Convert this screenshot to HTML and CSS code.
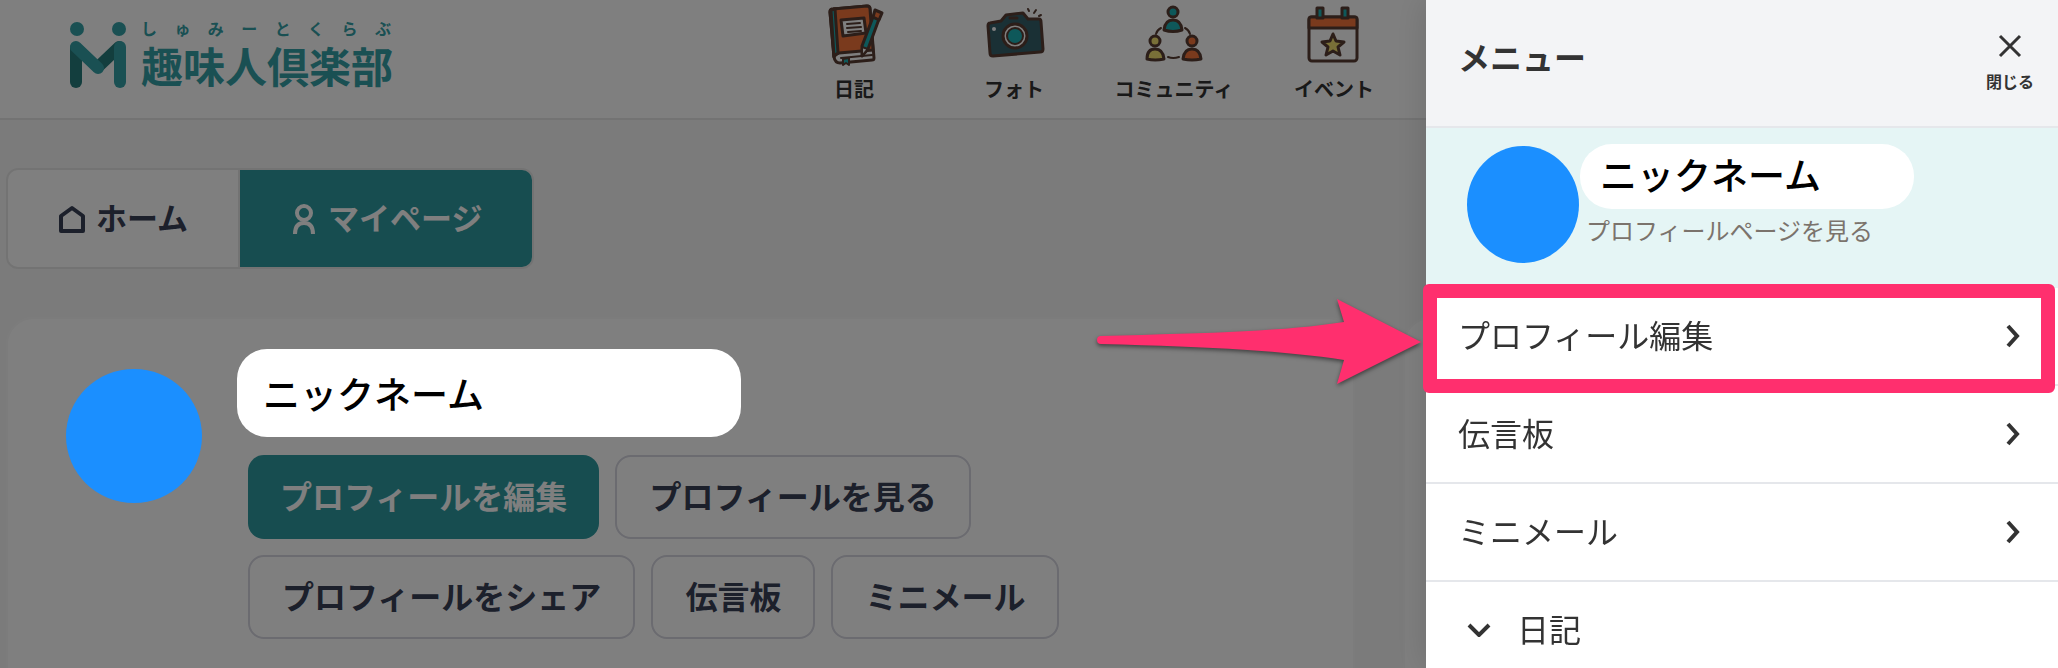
FILE: index.html
```html
<!DOCTYPE html>
<html lang="ja">
<head>
  <meta charset="UTF-8" />
  <meta name="viewport" content="width=device-width, initial-scale=1.0"/>
  <title>趣味人倶楽部</title>

  <link rel="stylesheet" href="styles.css">
</head>
<body>

<header class="site-header">
  <a class="logo" href="#">
    <svg class="logo-mark" viewBox="0 0 56 66" aria-hidden="true">
      <circle cx="7" cy="7" r="7" fill="#34a0a6"/>
      <circle cx="49" cy="7" r="7" fill="#34a0a6"/>
      <path d="M6 26V60" stroke="#277c7c" stroke-width="12" stroke-linecap="round"/>
      <path d="M28 45L49 25" stroke="#277c7c" stroke-width="12" stroke-linecap="round"/>
      <path d="M50 25V60" stroke="#34a0a6" stroke-width="12" stroke-linecap="round"/>
      <path d="M6 25L28 46" stroke="#34a0a6" stroke-width="12" stroke-linecap="round"/>
    </svg>
    <span class="logo-text">
      <span class="logo-kana"><i>し</i><i>ゅ</i><i>み</i><i>ー</i><i>と</i><i>く</i><i>ら</i><i>ぶ</i></span>
      <span class="logo-name">趣味人倶楽部</span>
    </span>
  </a>

  <nav class="site-nav">
    <a href="#">
      <svg viewBox="0 0 70 70" aria-hidden="true" stroke="#583c32" stroke-width="3" stroke-linejoin="round" stroke-linecap="round">
        <path d="M14 9L48 6Q51 6 51 9L55 58Q55 60 53 60L21 63Q16 63 15 57L11 12Q11 9 14 9Z" fill="#fff"/>
        <path d="M14 9L48 6Q51 6 51 9L54 50L20 53Q16 54 15 57L11 12Q11 9 14 9Z" fill="#f4743b"/>
        <path d="M12 10L16 9L19 53L15 56Z" fill="#1cb0b4"/>
        <path d="M22 20L45 18L47 33L24 36Z" fill="#fff"/>
        <path d="M28 24L41 23M28 28L42 27M29 32L42 31" fill="none" stroke-width="2"/>
        <path d="M22 58L53 55" fill="none" stroke-width="2"/>
        <path d="M24 59V65L27 63L30 65V58Z" fill="#1cb0b4" stroke-width="2"/>
        <path d="M54 17L60 19L49 49L43 56L43 46Z" fill="#1cb0b4"/>
        <path d="M56 10L63 13L60 20L54 17Z" fill="#f4743b"/>
        <path d="M43 47L49 49L43 56Z" fill="#fff" stroke-width="2"/>
      </svg>
      日記
    </a>
    <a href="#">
      <svg viewBox="0 0 70 70" aria-hidden="true" stroke="#583c32" stroke-width="3" stroke-linejoin="round" stroke-linecap="round">
        <path d="M11 23L22 21L27 15L44 13L49 19L60 19Q62 19 62 22L64 49Q64 52 61 52L14 56Q11 56 11 53L9 26Q9 23 11 23Z" fill="#35606a"/>
        <circle cx="36" cy="36" r="12" fill="#fff"/>
        <circle cx="36" cy="36" r="8" fill="#1cb0b4" stroke-width="2"/>
        <path d="M31 18L38 18" fill="none"/>
        <circle cx="15" cy="29" r="2" fill="#fff" stroke="none"/>
        <path d="M49 9L50 11M57 10L55 13M62 15L60 16" fill="none" stroke-width="2"/>
      </svg>
      フォト
    </a>
    <a href="#">
      <svg viewBox="0 0 70 70" aria-hidden="true" stroke="#583c32" stroke-width="3" stroke-linejoin="round" stroke-linecap="round">
        <circle cx="34" cy="12" r="5" fill="#1cb0b4"/>
        <path d="M25 30Q26 20 34 20Q42 20 43 30Q34 33 25 30Z" fill="#1cb0b4"/>
        <circle cx="16" cy="41" r="5" fill="#f2e070"/>
        <path d="M8 59Q8 49 16 49Q24 49 25 59Q16 61 8 59Z" fill="#f2e070"/>
        <circle cx="53" cy="41" r="5" fill="#f4743b"/>
        <path d="M44 59Q45 49 53 49Q61 49 62 59Q53 61 44 59Z" fill="#f4743b"/>
        <path d="M17 34Q18 30 22 28M46 28Q50 30 51 34M29 57Q34 59 40 57" fill="none" stroke-width="2"/>
      </svg>
      コミュニティ
    </a>
    <a href="#">
      <svg viewBox="0 0 70 70" aria-hidden="true" stroke="#583c32" stroke-width="3" stroke-linejoin="round" stroke-linecap="round">
        <rect x="10" y="17" width="48" height="44" rx="3" fill="#fff"/>
        <path d="M10 28V19Q10 17 12 17H56Q58 17 58 19V28Z" fill="#f4743b"/>
        <path d="M18 8H24V18H18ZM43 8H49V18H43Z" fill="#1cb0b4"/>
        <path d="M34 34L37 41L45 42L39 47L41 55L34 51L27 55L29 47L23 42L31 41Z" fill="#f2e070"/>
      </svg>
      イベント
    </a>
  </nav>
</header>

<main>
  <div class="tabs">
    <a href="#">
      <svg viewBox="0 0 28 30" aria-hidden="true" fill="none" stroke="currentColor" stroke-width="4" stroke-linejoin="round"><path d="M3 12L14 4L25 12V27H3Z"/></svg>
      <span>ホーム</span>
    </a>
    <a class="active" href="#">
      <svg viewBox="0 0 28 30" aria-hidden="true" fill="none" stroke="currentColor" stroke-width="4"><circle cx="14" cy="9" r="7"/><path d="M5 30Q5 19 14 19Q23 19 23 30"/></svg>
      <span>マイページ</span>
    </a>
  </div>

  <div class="columns">
    <section class="card profile">
      <div class="avatar"></div>
      <div class="profile-body">
        <div class="nickname">ニックネーム</div>
        <div class="actions">
          <button class="btn btn-primary" type="button">プロフィールを編集</button>
          <button class="btn" type="button">プロフィールを見る</button>
        </div>
        <div class="actions">
          <button class="btn" type="button">プロフィールをシェア</button>
          <button class="btn" type="button">伝言板</button>
          <button class="btn" type="button">ミニメール</button>
        </div>
      </div>
    </section>
    <aside class="card"></aside>
  </div>
</main>

<div class="overlay"></div>

<aside class="drawer">
  <div class="drawer-header">
    <h2>メニュー</h2>
    <button class="close" type="button">
      <svg viewBox="0 0 24 24" aria-hidden="true" fill="none" stroke="currentColor" stroke-width="3"><path d="M2 2L22 22M22 2L2 22"/></svg>
      閉じる
    </button>
  </div>

  <a class="drawer-profile" href="#">
    <span class="drawer-avatar"></span>
    <span>
      <span class="drawer-name">ニックネーム</span>
      <span class="drawer-link">プロフィールページを見る</span>
    </span>
  </a>

  <ul class="menu">
    <li class="highlight">
      <a href="#"><span>プロフィール編集</span>
        <svg class="chevron" viewBox="0 0 14 24" aria-hidden="true"><path d="M2 2L11 12L2 22"/></svg>
      </a>
      <svg class="arrow" viewBox="0 0 326 88" aria-hidden="true">
        <path d="M5 37C120 34 190 32 248 23L241 0L325 43L241 85L248 61C190 52 120 48 5 45A4 4 0 0 1 5 37Z" fill="#ff2f6e"/>
      </svg>
    </li>
    <li>
      <a href="#"><span>伝言板</span>
        <svg class="chevron" viewBox="0 0 14 24" aria-hidden="true"><path d="M2 2L11 12L2 22"/></svg>
      </a>
    </li>
    <li>
      <a href="#"><span>ミニメール</span>
        <svg class="chevron" viewBox="0 0 14 24" aria-hidden="true"><path d="M2 2L11 12L2 22"/></svg>
      </a>
    </li>
    <li>
      <button class="group" type="button">
        <svg class="chevron-down" viewBox="0 0 24 14" aria-hidden="true"><path d="M2 2L12 12L22 2"/></svg>
        <span>日記</span>
      </button>
    </li>
  </ul>
</aside>

</body>
</html>
```
FILE: styles.css
```css
* {
  box-sizing: border-box;
}

body {
  font-family: "Noto Sans CJK JP", sans-serif;
  background: #f7f7f7;
  color: #333;
  margin: 0;
  height: 100vh;
  overflow: hidden; /* no page scroll while the menu is open */
}

a {
  color: inherit;
  text-decoration: none;
}

button {
  font-family: inherit;
  color: inherit;
  background: none;
  border: none;
  padding: 0;
  cursor: pointer;
}

svg {
  display: block;
}

/* header */
.site-header {
  display: flex;
  justify-content: space-between;
  height: 120px;
  padding-left: 70px;
  padding-right: 644px;
  background: #fff;
  border-bottom: 2px solid #e7e7e7;
}

.logo {
  display: flex;
  gap: 15px;
  padding-top: 20px;
  color: #34a0a6;
}

.logo-mark {
  width: 56px;
  height: 66px;
  margin-top: 2px;
  fill: none;
}

.logo-text {
  width: 250px;
  white-space: nowrap;
}

.logo-kana {
  display: flex;
  justify-content: space-between;
  font-size: 16px;
  line-height: 16px;
  font-weight: bold;
}

.logo-kana i {
  font-style: normal;
}

.logo-name {
  display: block;
  margin-top: 8px;
  font-size: 42px;
  line-height: 42px;
  font-weight: bold;
}

.site-nav {
  display: flex;
}

.site-nav a {
  width: 160px;
  display: flex;
  flex-direction: column;
  align-items: center;
  gap: 7px;
  font-size: 20px;
  line-height: 24px;
  font-weight: bold;
}

.site-nav svg {
  width: 70px;
  height: 70px;
}

/* page */
main {
  padding: 48px 6px 0;
}

.tabs {
  display: inline-flex;
  height: 101px;
  border: 2px solid #e7e7e7;
  border-radius: 12px;
  background: #fff;
  overflow: hidden;
}

.tabs a {
  display: flex;
  align-items: center;
  gap: 10px;
  padding: 0 50px;
  font-size: 31px;
  font-weight: bold;
  color: #384056;
}

.tabs span {
  padding-bottom: 4px;
}

.tabs a + a {
  border-left: 2px solid #e7e7e7;
}

.tabs svg {
  width: 28px;
  height: 30px;
}

.tabs .active {
  background: #2e9aa0;
  color: #fff;
}

.columns {
  display: grid;
  grid-template-columns: 1fr 649px;
  gap: 48px;
  margin-top: 48px;
}

.card {
  min-height: 500px;
  background: #fff;
  border: 2px solid #f9f9f9;
  border-radius: 28px;
}

.profile {
  display: flex;
  gap: 35px;
  padding: 30px 58px;
}

.avatar {
  position: relative;
  z-index: 2;
  width: 136px;
  height: 134px;
  margin-top: 20px;
  border-radius: 50%;
  background: #1b8fff;
}

.nickname {
  position: relative;
  z-index: 2;
  width: 504px;
  margin-bottom: 18px;
  padding: 0 26px;
  border-radius: 30px;
  background: #fff;
  color: #000;
  font-size: 37px;
  line-height: 88px;
  font-weight: 500;
}

.actions {
  display: flex;
  gap: 16px;
  margin: 0 0 16px 11px;
}

.btn {
  height: 84px;
  padding: 0 32px 4px;
  border: 2px solid #d6d6e0;
  border-radius: 16px;
  font-size: 32px;
  font-weight: bold;
  color: #384056;
}

.btn-primary {
  border: none;
  background: #2e9aa0;
  color: #fff;
}

.overlay {
  position: fixed;
  inset: 0;
  z-index: 1;
  background: rgba(0, 0, 0, 0.5);
}

/* side menu */
.drawer {
  position: fixed;
  top: 0;
  right: 0;
  bottom: 0;
  z-index: 3;
  width: 632px;
  background: #fff;
  box-shadow: 0 0 32px rgba(0, 0, 0, 0.15);
}

.drawer-header {
  display: flex;
  justify-content: space-between;
  align-items: center;
  height: 128px;
  padding: 0 24px 14px 32px;
  background: #f3f4f6;
  border-bottom: 2px solid #e5e7eb;
}

.drawer-header h2 {
  margin: 0;
  font-size: 32px;
  font-weight: bold;
}

.close {
  display: flex;
  flex-direction: column;
  align-items: center;
  gap: 11px;
  padding-top: 15px;
  font-size: 16px;
  line-height: 24px;
  font-weight: bold;
}

.close svg {
  width: 24px;
  height: 24px;
}

.drawer-profile {
  display: flex;
  gap: 1px;
  height: 160px;
  padding: 16px 41px;
  background: #e5f5f5;
}

.drawer-avatar {
  width: 112px;
  height: 117px;
  margin-top: 2px;
  border-radius: 50%;
  background: #1b8fff;
}

.drawer-name {
  display: block;
  width: 334px;
  padding: 0 20px 4px;
  border-radius: 32px;
  background: #fff;
  color: #000;
  font-size: 37px;
  line-height: 61px;
  font-weight: 500;
}

.drawer-link {
  display: block;
  padding: 5px 0 0 6px;
  font-size: 24px;
  line-height: 32px;
  color: #7b736c;
}

.menu {
  list-style: none;
  margin: 0;
  padding: 0;
}

.menu li {
  position: relative;
  border-bottom: 2px solid #e5e7eb;
}

.menu a,
.group {
  display: flex;
  align-items: center;
  width: 100%;
  height: 96px;
  padding: 0 38px 0 32px;
  font-size: 32px;
}

.menu a {
  justify-content: space-between;
}

.menu span {
  padding-bottom: 4px;
}

.menu .group {
  gap: 26px;
  padding-left: 41px;
}

.chevron,
.chevron-down {
  width: 14px;
  height: 24px;
  fill: none;
  stroke: #333;
  stroke-width: 4;
}

.chevron-down {
  width: 24px;
  height: 14px;
}

/* frame and arrow pointing at the menu item */
.highlight::after {
  content: "";
  position: absolute;
  z-index: 1;
  inset: -4px 3px -9px -3px;
  border: 14px solid #ff2f6e;
  border-radius: 6px;
  pointer-events: none;
}

.arrow {
  position: absolute;
  top: 11px;
  right: 636px;
  width: 326px;
  height: 88px;
  overflow: visible;
  filter: drop-shadow(0 2px 2px rgba(0, 0, 0, 0.5));
}
```
